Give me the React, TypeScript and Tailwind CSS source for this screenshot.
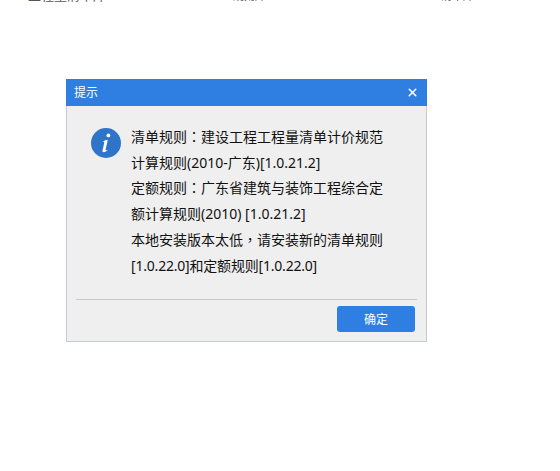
import { X } from 'lucide-react';

const FONT = "font-['Noto_Sans','Noto_Sans_CJK_SC',sans-serif]";
const PUNCT = "font-['Noto_Sans_CJK_TC',sans-serif]";

function InfoIcon() {
  return (
    <svg width="30" height="30" viewBox="0 0 30 30" className="shrink-0">
      <circle cx="15" cy="15" r="15" fill="#2e74c9" />
      <circle cx="17.4" cy="7.4" r="1.9" fill="#fff" />
      <path
        d="M12.2 13.2c1.5-.8 3.1-1.3 4.6-1.4l-2.2 9.9c-.2.9.3 1 1.6.1l.3.5c-1.4 1.3-2.7 2-3.8 2-1 0-1.4-.6-1.2-1.7l1.7-7.6c.1-.8-.2-1.1-1-1.2z"
        fill="#fff"
      />
    </svg>
  );
}

export default function App() {
  return (
    <div className={`h-[471px] w-[560px] overflow-hidden bg-white ${FONT}`}>
      {/* page behind the dialog, only the last pixels of its text show */}
      <div className="h-[2px] overflow-hidden leading-[2px] text-[#555]">
        <div className="flex h-[2px] items-end">
          <span className="ml-[28px] w-[205px] -translate-y-[6px] text-[13px]">工程量清单库</span>
          <span className="w-[208px] -translate-y-[5px] text-[11px]">规则库</span>
          <span className="-translate-y-[5px] text-[11px]">清单库</span>
        </div>
      </div>

      <div className="ml-[66px] mt-[77px] flex h-[263px] w-[361px] flex-col border border-t-0 border-[#c5cad6] bg-[#efefef]">
        <div className="-mx-px flex h-[27px] items-center justify-between bg-[#2e7fe1] pl-[8px] pr-[8px] text-[12px] text-white">
          <span className="pt-[1px]">提示</span>
          <X className="h-[13px] w-[13px]" strokeWidth={2.8} />
        </div>

        <div className="flex flex-1 gap-[10px] pl-[24px] pt-[18px]">
          <div className="pt-[4px]">
            <InfoIcon />
          </div>
          <div className="w-[254px] text-[14px] leading-[25.7px] text-[#111]">
            <div>
              清单规则<span className={PUNCT}>：</span>建设工程工程量清单计价规范
            </div>
            <div>计算规则(2010-广东)[1.0.21.2]</div>
            <div>
              定额规则<span className={PUNCT}>：</span>广东省建筑与装饰工程综合定
            </div>
            <div>额计算规则(2010) [1.0.21.2]</div>
            <div>
              本地安装版本太低<span className={PUNCT}>，</span>请安装新的清单规则
            </div>
            <div className="tracking-[-0.2px]">[1.0.22.0]和定额规则[1.0.22.0]</div>
          </div>
        </div>

        <div className="mx-[9px] flex h-[42px] items-start justify-end border-t border-[#c8c8c8] pr-[2px] pt-[6px]">
          <button
            type="button"
            className="flex h-[26px] w-[78px] items-center justify-center rounded-[3px] bg-[#2e7fe1] pt-[2px] text-[12px] text-white"
          >
            确定
          </button>
        </div>
      </div>
    </div>
  );
}
